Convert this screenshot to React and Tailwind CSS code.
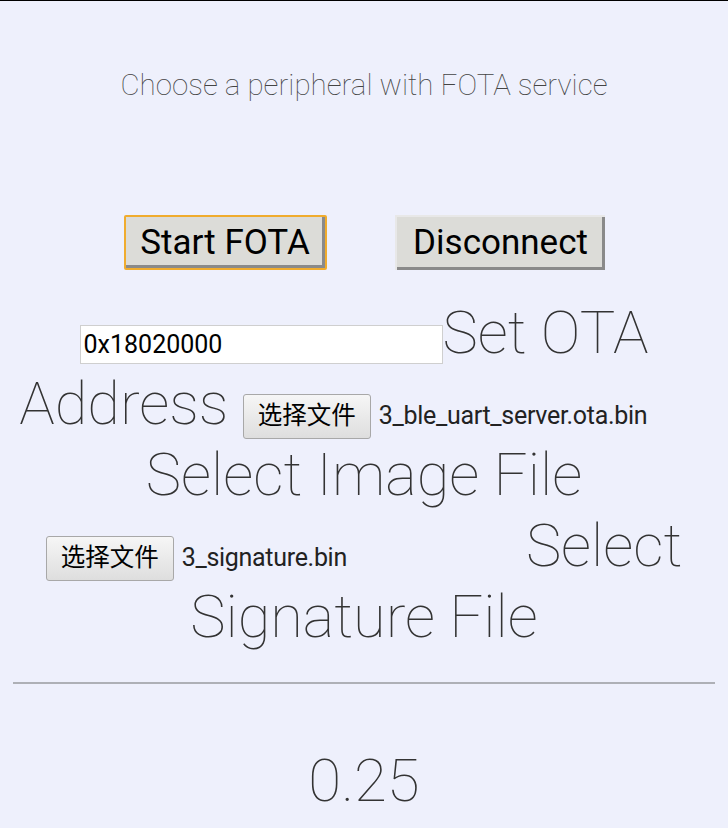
import React from 'react';

const FileField = ({ name }) => (
  <span className="inline-flex w-[466px] items-baseline align-baseline leading-none">
    <span className="inline-block h-[45px] rounded-[3px] border border-[#a8a8a8] bg-gradient-to-b from-[#f6f6f6] to-[#dedede] px-[14px] pt-[9px] text-[24.5px] text-black font-['Roboto','Noto_Sans_CJK_SC',sans-serif] font-normal">
      选择文件
    </span>
    <span className="ml-[8px] text-[25px] font-normal text-[#222] tracking-[-0.3px]">{name}</span>
  </span>
);

const App = () => {
  return (
    <div className="min-h-[828px] border-t border-black bg-[#eef0fc] font-['Roboto',sans-serif] text-center">
      <p className="pt-[66px] text-[29.5px] font-thin leading-[36px] text-[#444]">
        Choose a peripheral with FOTA service
      </p>

      <div className="mt-[112px] flex justify-center gap-[68px]">
        <button className="h-[55px] w-[203px] rounded-[2px] border-2 border-[#f0ac2e] bg-[#dcdcd8] text-[35px] text-black shadow-[inset_-3px_-3px_0_#8a8a8a]">
          Start FOTA
        </button>
        <button className="h-[55px] w-[210px] border-t-2 border-l-2 border-[#e8e8e8] bg-[#dcdcd8] text-[35px] text-black shadow-[inset_-3px_-3px_0_#8a8a8a]">
          Disconnect
        </button>
      </div>

      <div className="mt-[28px] px-[16px] text-[59.5px] font-thin leading-[71px] text-[#333]">
        <input
          readOnly
          value="0x18020000"
          className="h-[39px] w-[363px] border border-[#cfcfcf] bg-white px-[3px] align-baseline text-[25px] font-normal text-black outline-none"
        />
        Set OTA Address <FileField name="3_ble_uart_server.ota.bin" /> Select Image File{' '}
        <FileField name="3_signature.bin" /> Select Signature File
      </div>

      <hr className="mx-[13px] mt-[29px] border-t-2 border-[#aeb0b6]" />

      <p className="mt-[62px] text-[60px] font-thin leading-[70px] text-[#333]">0.25</p>
    </div>
  );
};

export default App;
